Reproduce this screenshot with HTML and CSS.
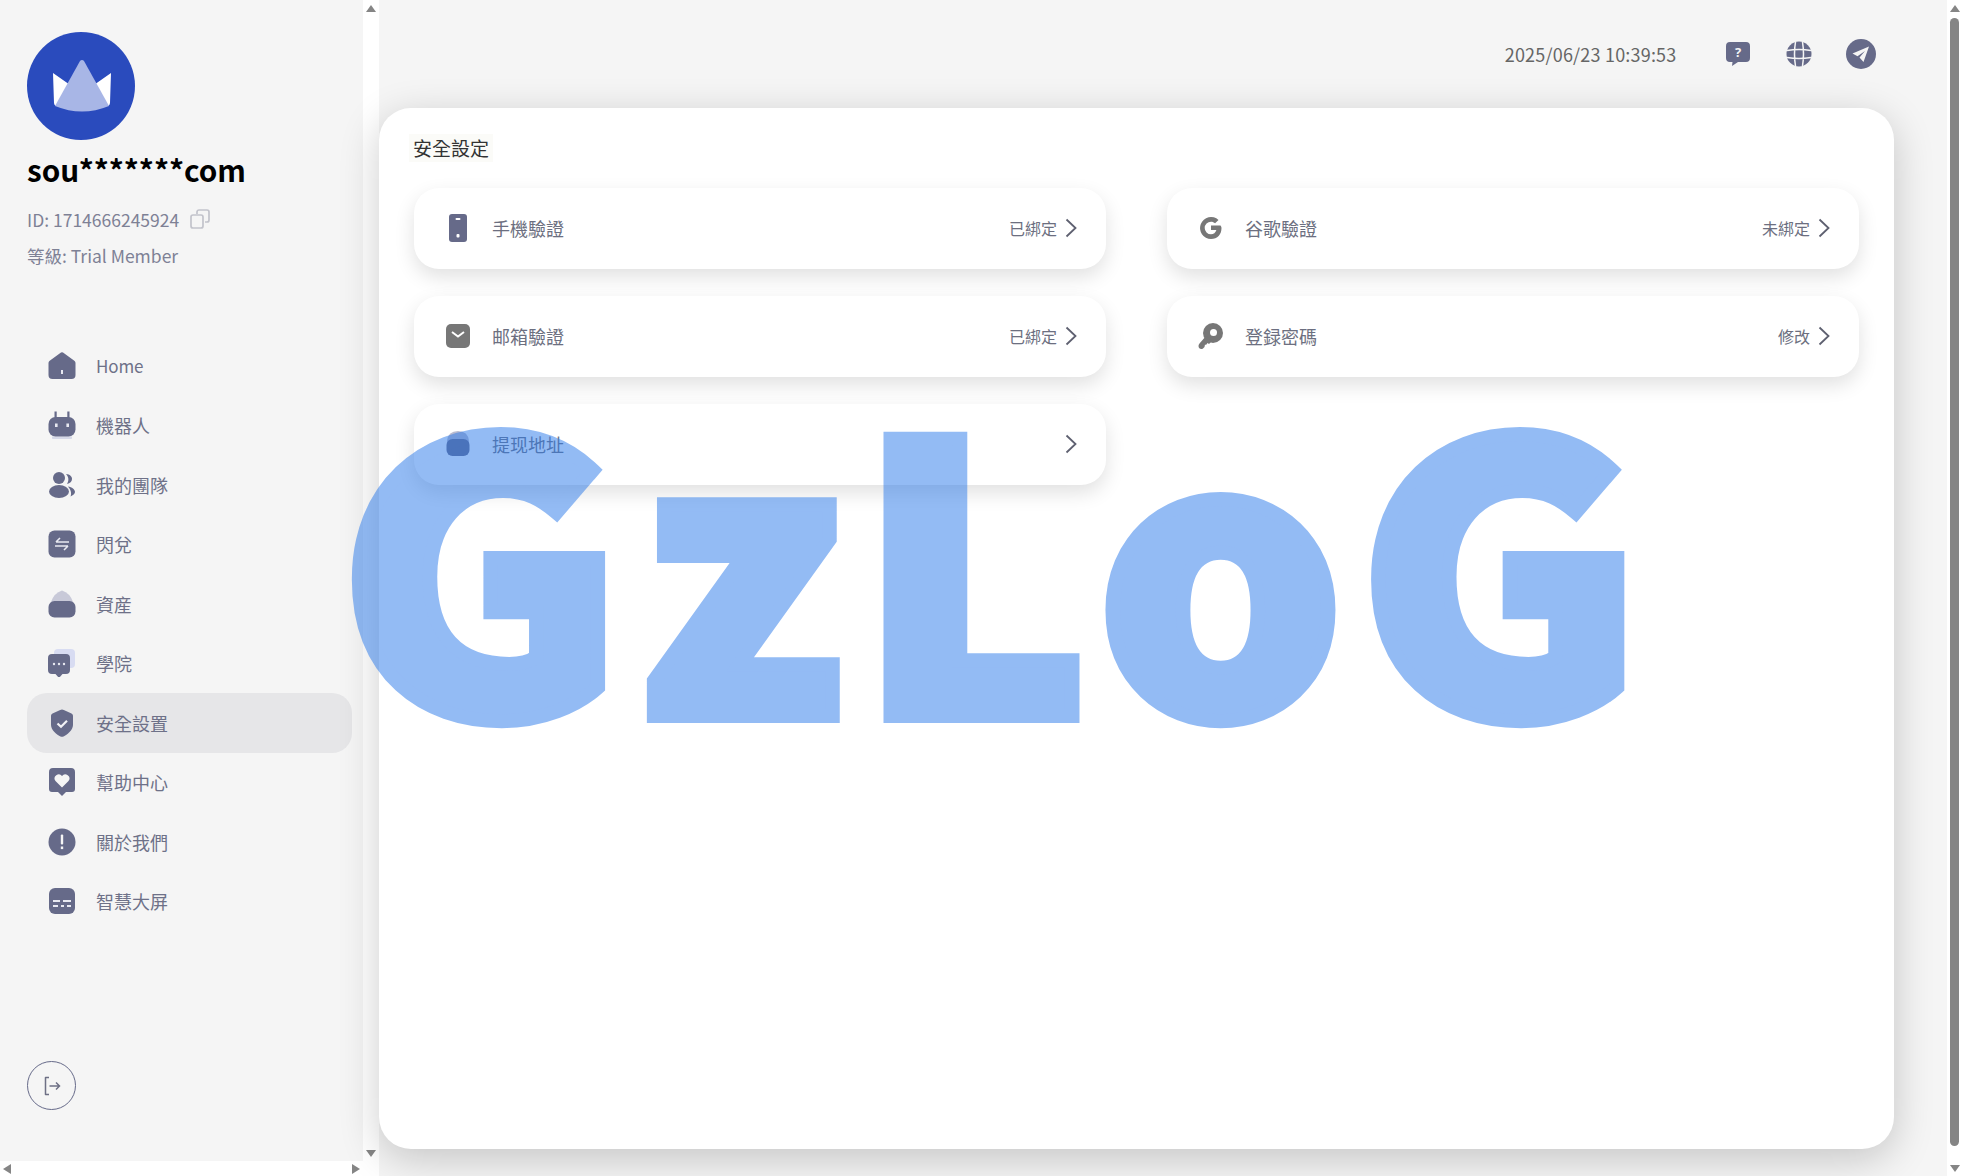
FILE: index.html
```html
<!DOCTYPE html>
<html lang="zh-Hant">
<head>
<meta charset="utf-8">
<title>安全設定</title>
<link rel="stylesheet" href="styles.css">
</head>
<body>
<div class="app">
  <aside class="side">
    <div class="side-view">
      <div class="side-body">
        <div class="avatar">
          <svg viewBox="0 0 108 108" width="108" height="108"><circle cx="54" cy="54" r="54" fill="#2a4bbd"/><path d="M26 41l20 14-17 19q-2-1-2-3zM84 41L64 55l17 19q2-1 2-3z" fill="#fff"/><path d="M55 28a3 3 0 0 0-2 1L28 74q27 11 54 0L57 29a3 3 0 0 0-2-1z" fill="#a8b6e6"/></svg>
        </div>
        <h1 class="name">sou*******com</h1>
        <div class="uid"><span>ID: 1714666245924</span>
          <svg class="copy" viewBox="0 0 20 20" width="20" height="20"><rect x="1" y="6" width="12" height="13" rx="2" fill="none" stroke="#c2c3cb" stroke-width="1.7"/><path d="M7 5V3a2 2 0 0 1 2-2h8a2 2 0 0 1 2 2v8a2 2 0 0 1-2 2h-2" fill="none" stroke="#c2c3cb" stroke-width="1.7"/></svg>
        </div>
        <div class="level">等級: Trial Member</div>
        <nav class="nav">
          <a class="item"><svg viewBox="0 0 28 28" width="28" height="28"><path class="ic" d="M12 1.200a3 3 0 0 1 4 0l10 7.300a3 3 0 0 1 1.500 2.200V23a4 4 0 0 1-4 4H4.500a4 4 0 0 1-4-4V10.700A3 3 0 0 1 2 8.500z"/><rect x="13" y="18" width="2" height="4" fill="#e8e9f1"/></svg><span class="latin">Home</span></a>
          <a class="item"><svg viewBox="0 0 28 28" width="28" height="28"><path d="M4 25.500h20v1a2 2 0 0 1-2 2H6a2 2 0 0 1-2-2z" fill="#d6d9e8"/><rect class="ic" x="6.500" y="0.500" width="2.200" height="7"/><rect class="ic" x="19.300" y="0.500" width="2.200" height="7"/><rect class="ic" x="0.500" y="6" width="27" height="19.500" rx="7"/><rect x="7" y="12.500" width="2.600" height="3.500" fill="#e8e9f1"/><rect x="18.400" y="12.500" width="2.600" height="3.500" fill="#e8e9f1"/></svg><span>機器人</span></a>
          <a class="item"><svg viewBox="0 0 28 28" width="28" height="28"><circle class="ic" cx="11" cy="7" r="6"/><ellipse class="ic" cx="11" cy="20.500" rx="10" ry="6.500"/><path class="ic" d="M18 3c4 .3 6 2.500 6 5s-2 4.500-5 5c2-3.500 2-6.500-1-10zM20 15.500c4 .5 7 3 7 5.500 0 1.500-2 3.500-4.500 4.500 1.500-3.500 0-7-2.500-10z"/></svg><span>我的團隊</span></a>
          <a class="item"><svg viewBox="0 0 28 28" width="28" height="28"><rect class="ic" x="0.500" y="0.500" width="27" height="27" rx="6"/><path d="M8 12h13M8 12l4-4M20 16H7M20 16l-4 4" fill="none" stroke="#e8e9f1" stroke-width="1.600"/></svg><span>閃兌</span></a>
          <a class="item"><svg viewBox="0 0 28 28" width="28" height="28"><path d="M3 12Q6 3 14 0.500q8 2.500 11 11.500v4H3z" fill="#c8c9d8"/><rect class="ic" x="0.500" y="11" width="27" height="16.500" rx="6"/></svg><span>資産</span></a>
          <a class="item"><svg viewBox="0 0 28 28" width="28" height="28"><rect x="6" y="0" width="21" height="19" rx="4" fill="#d8dcf2"/><path class="ic" d="M4 5h14a4 4 0 0 1 4 4v12a4 4 0 0 1-4 4h-3.500L11 29l-3.500-4H4a4 4 0 0 1-4-4V9a4 4 0 0 1 4-4z"/><circle cx="6" cy="15" r="1.200" fill="#e8e9f1"/><circle cx="11" cy="15" r="1.200" fill="#e8e9f1"/><circle cx="16" cy="15" r="1.200" fill="#e8e9f1"/></svg><span>學院</span></a>
          <a class="item active"><svg viewBox="0 0 28 28" width="28" height="28"><path class="ic" d="M12.200 1a4 4 0 0 1 3.600 0l7.700 3.500A2.500 2.500 0 0 1 25 6.800V16c0 5-6 10-9.500 11.500a4 4 0 0 1-3 0C9 26 3 21 3 16V6.800a2.500 2.500 0 0 1 1.500-2.300z"/><path d="M9.500 14.500l3.500 3.300 6-6" fill="none" stroke="#f2f2f6" stroke-width="2.200"/></svg><span>安全設置</span></a>
          <a class="item"><svg viewBox="0 0 28 28" width="28" height="28"><path class="ic" d="M5 0h18a4 4 0 0 1 4 4v17a3 3 0 0 1-3 3h-6l-4 4-4-4H4a3 3 0 0 1-3-3V4a4 4 0 0 1 4-4z"/><path d="M14 19.500l-6.500-6.500a4 4 0 0 1 6.500-5 4 4 0 0 1 6.500 5z" fill="#f5f5f5"/></svg><span>幫助中心</span></a>
          <a class="item"><svg viewBox="0 0 28 28" width="28" height="28"><circle class="ic" cx="14" cy="14" r="13.500"/><rect x="12.800" y="6.500" width="2.400" height="10" rx="1" fill="#f5f5f5"/><rect x="12.800" y="18.500" width="2.400" height="2.600" fill="#f5f5f5"/></svg><span>關於我們</span></a>
          <a class="item"><svg viewBox="0 0 28 28" width="28" height="28"><rect class="ic" x="1" y="1" width="26" height="26" rx="6"/><path d="M5 14h7M15 14h8M5 19h5M13 19h3M19 19h4" stroke="#e8e9f1" stroke-width="2" fill="none"/></svg><span>智慧大屏</span></a>
        </nav>
        <div class="grow"></div>
        <button class="logout" type="button" aria-label="logout"><svg viewBox="0 0 20 20" width="20" height="20"><path d="M7 1.500H3.500v17H7" fill="none" stroke="#6e7085" stroke-width="1.500" stroke-linejoin="round"/><path d="M7.500 10h10M14 6.500l3.500 3.500-3.500 3.500" fill="none" stroke="#6e7085" stroke-width="1.500"/></svg></button>
      </div>
      <div class="hbar"><i class="tri left"></i><i class="tri right"></i></div>
    </div>
    <div class="vbar"><i class="tri up"></i><i class="tri down"></i></div>
  </aside>

  <main class="main">
    <header class="top">
      <span class="time">2025/06/23 10:39:53</span>
      <svg class="t1" viewBox="0 0 26 26" width="26" height="26"><path class="ic" d="M5 1h16a4 4 0 0 1 4 4v12a4 4 0 0 1-4 4h-8l-6 4 .5-4H5a4 4 0 0 1-4-4V5a4 4 0 0 1 4-4z"/><text x="13" y="15.500" class="qm">?</text></svg>
      <svg class="t2" viewBox="0 0 26 26" width="26" height="26"><circle class="ic" cx="13" cy="13" r="12.500"/><path d="M1 9.500Q13 7.500 25 9.500M1 16.500Q13 18.500 25 16.500M9.500 1Q7.500 13 9.500 25M16.500 1Q18.500 13 16.500 25" stroke="#f5f5f5" stroke-width="1.500" fill="none"/></svg>
      <svg class="t3" viewBox="0 0 30 30" width="30" height="30"><circle class="ic" cx="15" cy="15" r="15"/><path d="M23 7.500L6.500 14.500l5 2.800 7.500-5.300-5.500 6.500 4 4.500z" fill="#f5f5f5"/></svg>
    </header>
    <section class="card">
      <h2 class="title">安全設定</h2>
      <div class="rows">
        <div class="row"><svg class="ri" viewBox="0 0 28 28" width="28" height="28"><rect class="ic" x="5" y="0" width="18" height="28" rx="3"/><rect x="11.500" y="4" width="5" height="2" rx="1" fill="#fff"/><rect x="12.500" y="20" width="3" height="3.500" rx="1" fill="#fff"/></svg><span class="rt">手機驗證</span><span class="rs">已綁定</span><svg class="chev" viewBox="0 0 12 20" width="12" height="20"><path d="M1.500 1.500l9 8.500-9 8.500" fill="none" stroke="#5e6070" stroke-width="1.800"/></svg></div>
        <div class="row"><svg class="ri" viewBox="0 0 28 28" width="28" height="28"><path class="ig" d="M23.500 11.500H14V16h5.400c-.8 2.800-2.800 4.300-5.400 4.300a6.300 6.300 0 0 1 0-12.600c1.600 0 3 .6 4.100 1.600l3.400-3.400A11 11 0 1 0 14 25c6.500 0 10.500-4.600 10.500-11 0-.9-.3-1.700-1-2.500z"/></svg><span class="rt">谷歌驗證</span><span class="rs">未綁定</span><svg class="chev" viewBox="0 0 12 20" width="12" height="20"><path d="M1.500 1.500l9 8.500-9 8.500" fill="none" stroke="#5e6070" stroke-width="1.800"/></svg></div>
        <div class="row"><svg class="ri" viewBox="0 0 28 28" width="28" height="28"><rect class="ig" x="2" y="2" width="24" height="24" rx="5"/><path d="M8 10l6 4.500 6-4.500" fill="none" stroke="#fff" stroke-width="2"/></svg><span class="rt">邮箱驗證</span><span class="rs">已綁定</span><svg class="chev" viewBox="0 0 12 20" width="12" height="20"><path d="M1.500 1.500l9 8.500-9 8.500" fill="none" stroke="#5e6070" stroke-width="1.800"/></svg></div>
        <div class="row"><svg class="ri" viewBox="0 0 28 28" width="28" height="28"><circle class="ig" cx="16" cy="11" r="10"/><path class="ig" d="M9 14l6 5-3 3-1.500-1-1.500 2-1-.5-.5 2.500-1.500 1.500c-2 1.500-4.500 0-4.500-2.500q0-1.500 1-2.500z"/><circle cx="16.500" cy="10.500" r="3.500" fill="#fff"/></svg><span class="rt">登録密碼</span><span class="rs">修改</span><svg class="chev" viewBox="0 0 12 20" width="12" height="20"><path d="M1.500 1.500l9 8.500-9 8.500" fill="none" stroke="#5e6070" stroke-width="1.800"/></svg></div>
        <div class="row"><svg class="ri" viewBox="0 0 28 28" width="28" height="28"><path d="M3 11Q4 1 14 1t11 10v4H3z" fill="#b9bbd0"/><rect class="ic" x="2.500" y="9" width="23" height="17" rx="6"/></svg><span class="rt">提现地址</span><span class="rs"></span><svg class="chev" viewBox="0 0 12 20" width="12" height="20"><path d="M1.500 1.500l9 8.500-9 8.500" fill="none" stroke="#5e6070" stroke-width="1.800"/></svg></div>
      </div>
    </section>
  </main>
  <div class="pagebar"><i class="tri up"></i><div class="thumb"></div><i class="tri down"></i></div>
</div>
<div class="mark">GzLoG</div>
</body>
</html>
```

FILE: styles.css
```css
* { box-sizing: border-box; }
html, body { margin: 0; height: 100%; overflow: hidden; }
body {
  background: #f5f5f5;
  font-family: "Noto Sans CJK TC", "Noto Sans", sans-serif;
  color: #666a89;
}
.app { display: flex; height: 1176px; width: 1962px; }
.ic { fill: #666a89; }
.ig { fill: #777; }

.side { display: flex; width: 379px; flex: none; }
.side-view { display: flex; flex-direction: column; width: 363px; }
.side-body { flex: 1; display: flex; flex-direction: column; padding: 32px 11px 51px 27px; }
.avatar { height: 108px; }
.avatar svg { display: block; }
.name { margin: 8px 0 0; font-size: 29.700px; line-height: 44px; font-weight: 700; color: #000; }
.uid { display: flex; align-items: center; gap: 11px; margin-top: 15px; font-size: 17.500px; line-height: 26px; color: #7e8195; }
.copy { margin-top: -2px; }
.level { margin-top: 10px; font-size: 17.500px; line-height: 26px; color: #7e8195; }
.nav { display: flex; flex-direction: column; margin-top: 67px; }
.item { display: flex; align-items: center; gap: 20px; height: 59.500px; padding-left: 21px; border-radius: 20px; font-size: 18px; color: #6e7188; }
.item svg { flex: none; }
.item .latin { font-size: 17px; letter-spacing: -.1px; }
.item.active { background: #e6e6e8; }
.grow { flex: 1; }
.logout { width: 49px; height: 49px; padding: 0; border: 1.500px solid #666a89; border-radius: 50%; background: transparent; display: flex; align-items: center; justify-content: center; }

.hbar { height: 15px; background: #fff; display: flex; justify-content: space-between; align-items: center; padding: 0 3px; }
.vbar { width: 16px; background: #fff; display: flex; flex-direction: column; justify-content: space-between; align-items: center; padding: 5px 0 19px; }
.tri { display: block; width: 0; height: 0; border-style: solid; border-color: transparent; }
.tri.up { border-width: 0 5px 7px; border-bottom-color: #858585; }
.tri.down { border-width: 7px 5px 0; border-top-color: #858585; }
.tri.left { border-width: 5px 8px 5px 0; border-right-color: #858585; }
.tri.right { border-width: 5px 0 5px 8px; border-left-color: #858585; }

.main { width: 1568px; flex: none; display: flex; flex-direction: column; padding-right: 53px; }
.top { height: 108px; display: flex; align-items: center; justify-content: flex-end; padding-right: 18.500px; }
.top .time { font-size: 18px; color: #666; letter-spacing: .2px; }
.t1 { margin-left: 48px; }
.t2 { margin-left: 35px; }
.t3 { margin-left: 34px; }
.qm { font-size: 13px; font-weight: 700; fill: #f5f5f5; text-anchor: middle; font-family: "Noto Sans", sans-serif; }
.card {
  height: 1041px; background: #fff; border-radius: 32px; padding: 26px 35px;
  box-shadow: 0 10px 40px rgba(0, 0, 0, .2);
}
.title { display: inline-block; margin: 0 0 0 -5px; padding: 0 4px; font-size: 19px; line-height: 28px; font-weight: 400; color: #333; background: #fbfbf8; vertical-align: top; }
.rows { display: grid; grid-template-columns: 692px 692px; column-gap: 61px; row-gap: 27px; margin-top: 26px; }
.row {
  display: flex; align-items: center; height: 81px; padding: 0 29px 2px 30px; border-radius: 25px; background: #fff;
  box-shadow: 0 8px 20px rgba(0, 0, 0, .12);
}
.ri { flex: none; }
.rt { margin-left: 20px; font-size: 18px; color: #6c6f80; flex: 1; }
.rs { font-size: 16px; color: #6c6f80; margin-right: 8px; }
.chev { flex: none; }

.pagebar { position: fixed; right: 0; top: 0; width: 15px; height: 1176px; background: #fff; display: flex; flex-direction: column; align-items: center; padding: 5px 0 4px; gap: 6px; }
.thumb { flex: 1; width: 9px; margin-bottom: 13px; border-radius: 5px; background: #858585; }

.mark {
  position: fixed; left: 339px; top: 368px;
  font-family: "Noto Sans CJK TC", sans-serif; font-weight: 900; font-size: 372px; line-height: 1; white-space: nowrap; letter-spacing: 14px;
  color: rgb(49, 125, 234); -webkit-text-stroke: 14px rgb(49, 125, 234); opacity: .52; pointer-events: none;
  transform: scaleX(1.04); transform-origin: 0 0;
}
```
